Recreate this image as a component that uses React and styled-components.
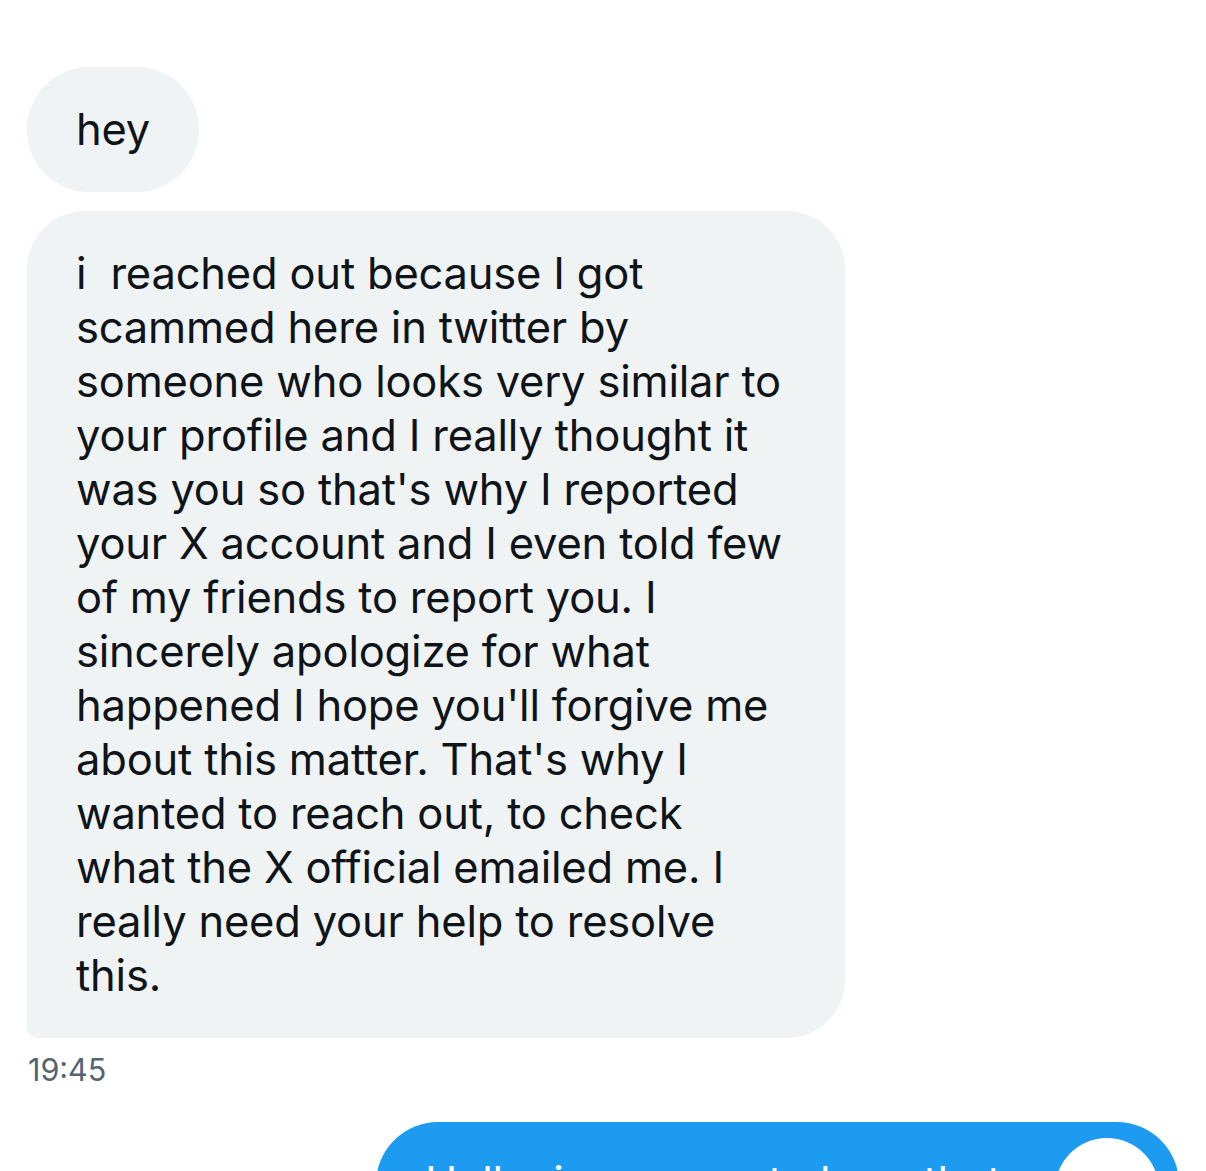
import styled, { createGlobalStyle } from "styled-components";

const GlobalStyle = createGlobalStyle`
  html, body {
    margin: 0;
    padding: 0;
    background: #ffffff;
  }
  body {
    font-family: Inter, "Noto Sans", "Liberation Sans", sans-serif;
    -webkit-font-smoothing: antialiased;
  }
`

const Thread = styled.div`
  display: flex;
  flex-direction: column;
  padding: 67px 28px 0 27px;
  height: 1171px;
  box-sizing: border-box;
  overflow: hidden;
`

const Received = styled.div`
  display: flex;
  flex-direction: column;
  align-items: flex-start;
  gap: 19px;
`

const Bubble = styled.div`
  box-sizing: border-box;
  background: #eff3f4;
  color: #0f1419;
  font-size: 43.5px;
  line-height: 54px;
  letter-spacing: -0.2px;
  padding: 35px 49px 36px;
  border-radius: ${props => props.last ? "58px 58px 58px 10px" : "62px"};
  width: ${props => props.wide ? "818px" : "auto"};
  white-space: pre;
`

const Time = styled.div`
  margin-top: 16px;
  margin-left: 1px;
  font-size: 30.5px;
  line-height: 32px;
  color: #536471;
`

const Sent = styled.div`
  display: flex;
  justify-content: flex-end;
  margin-top: 36px;
  margin-right: -1px;
`

const BlueBubble = styled.div`
  box-sizing: border-box;
  width: 803px;
  display: flex;
  align-items: flex-start;
  justify-content: space-between;
  background: #1d9bf0;
  color: #ffffff;
  font-size: 43.5px;
  line-height: 54px;
  letter-spacing: -0.2px;
  padding: 33px 20px 30px 49px;
  border-radius: 62px 62px 10px 62px;
`

const Avatar = styled.div`
  flex: none;
  width: 104px;
  height: 104px;
  margin-top: -17px;
  border-radius: 50%;
  background: #ffffff;
`

const lines = [
  "i  reached out because I got",
  "scammed here in twitter by",
  "someone who looks very similar to",
  "your profile and I really thought it",
  "was you so that's why I reported",
  "your X account and I even told few",
  "of my friends to report you. I",
  "sincerely apologize for what",
  "happened I hope you'll forgive me",
  "about this matter. That's why I",
  "wanted to reach out, to check",
  "what the X official emailed me. I",
  "really need your help to resolve",
  "this.",
];

export default function App() {
  return (
    <>
      <GlobalStyle />
      <Thread>
        <Received>
          <Bubble>hey</Bubble>
          <Bubble wide last>{lines.join("\n")}</Bubble>
        </Received>
        <Time>19:45</Time>
        <Sent>
          <BlueBubble>
            <span>Hello, i am sorry to hear that</span>
            <Avatar />
          </BlueBubble>
        </Sent>
      </Thread>
    </>
  );
}
